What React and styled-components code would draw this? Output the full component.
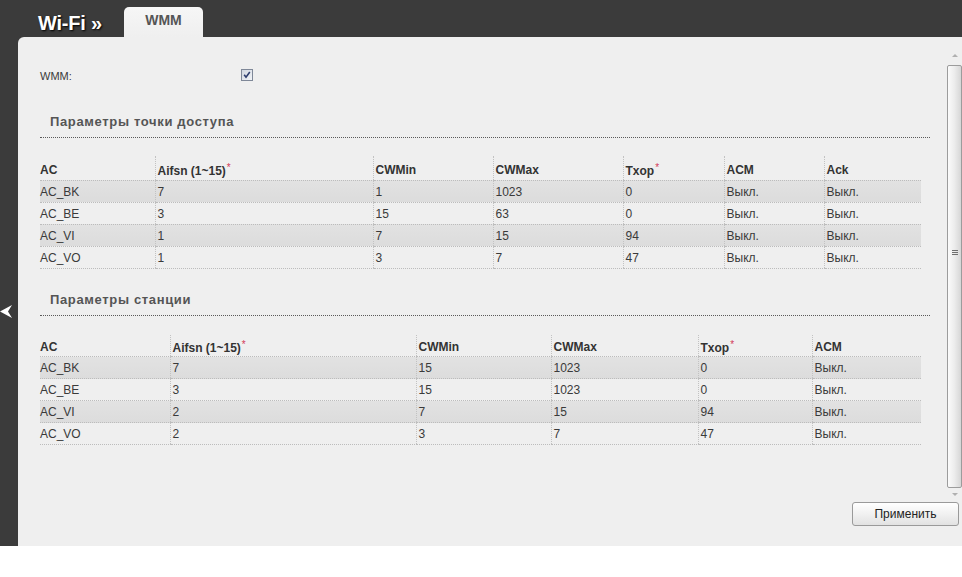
import React from "react";
import styled, { createGlobalStyle } from "styled-components";

const apColumns = [115, 218, 120, 130, 101, 100, 97];
const apHead = ["AC", "Aifsn (1~15)*", "CWMin", "CWMax", "Txop*", "ACM", "Ack"];
const apRows = [
    ["AC_BK", "7", "1", "1023", "0", "Выкл.", "Выкл."],
    ["AC_BE", "3", "15", "63", "0", "Выкл.", "Выкл."],
    ["AC_VI", "1", "7", "15", "94", "Выкл.", "Выкл."],
    ["AC_VO", "1", "3", "7", "47", "Выкл.", "Выкл."],
];

const staColumns = [130, 246, 135, 147, 114, 109];
const staHead = ["AC", "Aifsn (1~15)*", "CWMin", "CWMax", "Txop*", "ACM"];
const staRows = [
    ["AC_BK", "7", "15", "1023", "0", "Выкл."],
    ["AC_BE", "3", "15", "1023", "0", "Выкл."],
    ["AC_VI", "2", "7", "15", "94", "Выкл."],
    ["AC_VO", "2", "3", "7", "47", "Выкл."],
];

function ParamTable({ columns, head, rows, gap, headHeight }) {
    return (
        <Table $gap={gap}>
            <colgroup>
                {columns.map((w, i) => (
                    <Col key={i} $w={w} />
                ))}
            </colgroup>
            <thead>
                <tr>
                    {head.map((h) => (
                        <Th key={h} $h={headHeight}>
                            {h.endsWith("*") ? (
                                <>
                                    {h.slice(0, -1)}
                                    <Required>*</Required>
                                </>
                            ) : (
                                h
                            )}
                        </Th>
                    ))}
                </tr>
            </thead>
            <tbody>
                {rows.map((row, i) => (
                    <Tr key={row[0]} $striped={i % 2 === 0}>
                        {row.map((cell, j) => (
                            <Td key={j}>{cell}</Td>
                        ))}
                    </Tr>
                ))}
            </tbody>
        </Table>
    );
}

export default function App() {
    return (
        <>
            <GlobalStyle />
            <Page>
                <TopBar>
                    <Title>Wi-Fi »</Title>
                    <Tab>WMM</Tab>
                </TopBar>
                <SideNav>
                    <svg width="12" height="14" viewBox="0 0 12 14">
                        <polygon points="12,0 0,6.5 12,13 8,6.5" fill="#fff" />
                    </svg>
                </SideNav>
                <Panel>
                    <Body>
                        <Content>
                            <FieldRow>
                                <FieldLabel>WMM:</FieldLabel>
                                <Checkbox>
                                    <svg width="12" height="12" viewBox="0 0 12 12">
                                        <defs>
                                            <linearGradient id="cb" x1="0" y1="0" x2="1" y2="1">
                                                <stop offset="0" stopColor="#cfd5df" />
                                                <stop offset="1" stopColor="#f3f5f8" />
                                            </linearGradient>
                                        </defs>
                                        <rect x="0.5" y="0.5" width="11" height="11" fill="url(#cb)" stroke="#7f8898" />
                                        <path d="M3.2 5.8 L5 8.2 L8.8 3" fill="none" stroke="#2e3d6e" strokeWidth="1.6" />
                                    </svg>
                                </Checkbox>
                            </FieldRow>

                            <SectionTitle $top={29}>Параметры точки доступа</SectionTitle>
                            <ParamTable columns={apColumns} head={apHead} rows={apRows} gap={18} headHeight={24} />

                            <SectionTitle $top={23}>Параметры станции</SectionTitle>
                            <ParamTable columns={staColumns} head={staHead} rows={staRows} gap={19} headHeight={22} />
                        </Content>
                        <Scrollbar>
                            <Arrow />
                            <Thumb>
                                <Grip>
                                    <span />
                                    <span />
                                    <span />
                                </Grip>
                            </Thumb>
                            <Arrow $down />
                        </Scrollbar>
                    </Body>
                    <Footer>
                        <ApplyButton type="button">Применить</ApplyButton>
                    </Footer>
                </Panel>
            </Page>
        </>
    );
}

// estilos
const GlobalStyle = createGlobalStyle`
    html, body {
        margin: 0;
        padding: 0;
        background: #fff;
    }
    body {
        font-family: "Liberation Sans", Arial, sans-serif;
    }
    * {
        box-sizing: border-box;
    }
`;
const Page = styled.div`
    height: 546px;
    display: grid;
    grid-template-columns: 18px 1fr;
    grid-template-rows: 37px 1fr;
    background-color: #3b3b3b;
    overflow: hidden;
`;
const TopBar = styled.div`
    grid-column: 2;
    display: flex;
    align-items: flex-end;
    padding-left: 20px;
`;
const Title = styled.div`
    align-self: center;
    margin-top: 9px;
    font-size: 20px;
    font-weight: bold;
    letter-spacing: -0.2px;
    color: #fff;
    text-shadow: 1px 1px 2px #000;
`;
const Tab = styled.div`
    width: 79px;
    height: 30px;
    margin-left: 22px;
    padding-top: 5px;
    text-align: center;
    font-size: 14px;
    font-weight: bold;
    color: #555;
    border-radius: 5px 5px 0 0;
    background: linear-gradient(#f6f6f6, #efefef);
`;
const SideNav = styled.div`
    grid-column: 1;
    grid-row: 2;
    padding-top: 268px;
    display: flex;
    justify-content: flex-start;
    align-items: flex-start;
`;
const Panel = styled.main`
    grid-column: 2;
    grid-row: 2;
    display: flex;
    flex-direction: column;
    padding-top: 13px;
    background-color: #efefef;
    border-top-left-radius: 6px;
`;
const Body = styled.div`
    height: 448px;
    display: flex;
`;
const Content = styled.div`
    flex: 1;
    padding: 17px 16px 0 22px;
    color: #333;
`;
const FieldRow = styled.div`
    height: 18px;
    display: flex;
    align-items: center;
`;
const FieldLabel = styled.label`
    width: 201px;
    font-size: 11px;
    color: #3a3a3a;
`;
const Checkbox = styled.span`
    display: flex;
    margin-top: -2px;
`;
const SectionTitle = styled.h2`
    margin: ${(p) => p.$top}px 0 0;
    padding: 0 0 7px 10px;
    font-size: 13px;
    line-height: 16px;
    font-weight: bold;
    letter-spacing: 0.65px;
    color: #555;
    border-bottom: 1px dotted #5a5a5a;
`;
const Table = styled.table`
    width: 881px;
    margin-top: ${(p) => p.$gap}px;
    border-collapse: collapse;
    table-layout: fixed;
    font-size: 12px;
    color: #333;
`;
const Col = styled.col`
    width: ${(p) => p.$w}px;
`;
const Th = styled.th`
    height: ${(p) => p.$h}px;
    padding: 4px 0 0 2px;
    text-align: left;
    font-weight: bold;
    color: #333;
    border-left: 1px dotted #c2c2c2;
    border-bottom: 1px dotted #bcbcbc;
    &:first-child {
        border-left: none;
        padding-left: 0;
    }
`;
const Required = styled.sup`
    font-size: 10px;
    color: #d23a5a;
    font-weight: normal;
    vertical-align: 4px;
    margin-left: 1px;
`;
const Tr = styled.tr`
    background: ${(p) => (p.$striped ? "linear-gradient(#e2e2e2, #dcdcdc)" : "transparent")};
`;
const Td = styled.td`
    height: 22px;
    padding: 1px 0 0 2px;
    color: #3a3a3a;
    border-left: 1px dotted #c2c2c2;
    border-bottom: 1px dotted #bcbcbc;
    &:first-child {
        border-left: none;
        padding-left: 0;
    }
`;
const Scrollbar = styled.div`
    width: 16px;
    display: flex;
    flex-direction: column;
    align-items: center;
    padding-top: 4px;
`;
const Arrow = styled.div`
    width: 0;
    height: 0;
    border-left: 3px solid transparent;
    border-right: 3px solid transparent;
    ${(p) => (p.$down ? "border-top: 3px solid #b0b0b0;" : "border-bottom: 3px solid #b0b0b0;")}
    margin-left: 2px;
`;
const Thumb = styled.div`
    width: 15px;
    height: 423px;
    margin: 8px 0 5px 1px;
    border: 1px solid #9c9c9c;
    border-radius: 2px;
    background: linear-gradient(to right, #fbfbfb, #ececec 50%, #d6d6d6);
    display: flex;
    justify-content: center;
`;
const Grip = styled.div`
    margin-top: 184px;
    display: flex;
    flex-direction: column;
    gap: 1px;
    span {
        display: block;
        width: 6px;
        height: 1px;
        background: #6f6f6f;
    }
`;
const Footer = styled.div`
    display: flex;
    justify-content: flex-end;
    padding: 4px 3px 0 0;
`;
const ApplyButton = styled.button`
    width: 107px;
    height: 24px;
    font-family: "Liberation Sans", Arial, sans-serif;
    font-size: 12px;
    color: #222;
    border: 1px solid #9a9a9a;
    border-radius: 3px;
    background: linear-gradient(#ffffff, #f1f1f1 50%, #e2e2e2);
    cursor: pointer;
`;
